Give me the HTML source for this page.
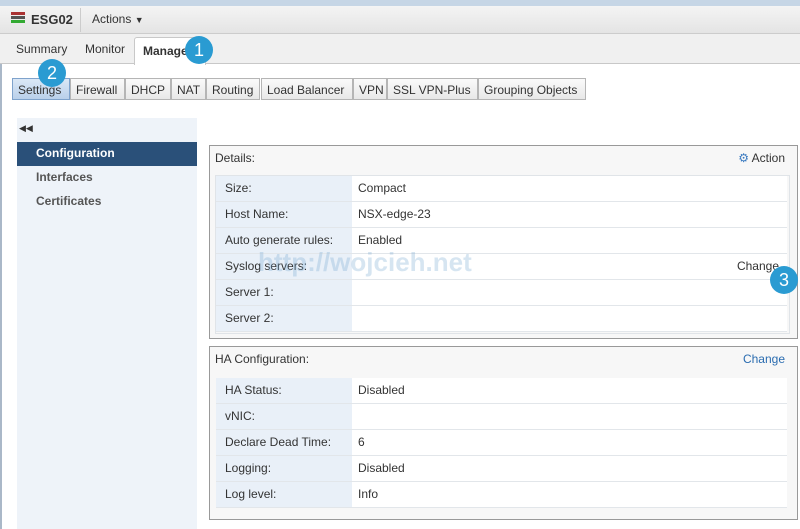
<!DOCTYPE html><html><head><style>
body{margin:0;width:800px;height:529px;overflow:hidden;background:#fff;font-family:"Liberation Sans",sans-serif;font-size:12px;color:#333;position:relative}
.a{position:absolute}
.tab{position:absolute;top:78px;height:22px;line-height:22px;border:1px solid #b5b5b5;background:linear-gradient(#fafafa,#e8e8e8);padding:0 5px;box-sizing:border-box}
.row{position:absolute;left:6px;right:10px;height:25px;border-bottom:1px solid #e2e6ea;background:#fff}
.row .l{position:absolute;left:0;top:0;width:136px;height:100%;background:#e9f0f8;padding-left:9px;line-height:25px;box-sizing:border-box}
.row .v{position:absolute;left:142px;line-height:25px}
.badge{position:absolute;width:28px;height:28px;border-radius:50%;background:#2a9bd2;color:#fff;font-size:18px;text-align:center;line-height:28px}
</style></head><body>
<div class="a" style="left:0;top:0;width:800px;height:6px;background:#c6d6e6"></div>
<div class="a" style="left:0;top:6px;width:800px;height:27px;background:linear-gradient(#f4f4f4,#e4e4e4);border-bottom:1px solid #ccc"></div>
<div class="a" style="left:11px;top:12px;width:14px;height:3px;background:#a33"></div>
<div class="a" style="left:11px;top:16px;width:14px;height:3px;background:#555"></div>
<div class="a" style="left:11px;top:20px;width:14px;height:3px;background:#3a3"></div>
<div class="a" style="left:31px;top:12px;font-size:13px;font-weight:bold;color:#333">ESG02</div>
<div class="a" style="left:80px;top:8px;width:1px;height:24px;background:#ccc"></div>
<div class="a" style="left:92px;top:12px;">Actions <span style="font-size:9px">▼</span></div>
<div class="a" style="left:0;top:34px;width:800px;height:29px;background:#f0f0f0;border-bottom:1px solid #c8c8c8"></div>
<div class="a" style="left:16px;top:42px">Summary</div>
<div class="a" style="left:85px;top:42px">Monitor</div>
<div class="a" style="left:134px;top:37px;width:70px;height:27px;background:#fff;border:1px solid #c8c8c8;border-bottom:none;border-radius:3px 3px 0 0"></div>
<div class="a" style="left:143px;top:44px;font-weight:bold">Manage</div>
<div class="badge" style="left:185px;top:36px">1</div>
<div class="tab" style="left:12px;width:58px;background:linear-gradient(#dbe8f6,#b9d0ea);border-color:#7fa3cc">Settings</div>
<div class="tab" style="left:70px;width:55px">Firewall</div>
<div class="tab" style="left:125px;width:46px">DHCP</div>
<div class="tab" style="left:171px;width:35px">NAT</div>
<div class="tab" style="left:206px;width:54px">Routing</div>
<div class="tab" style="left:261px;width:92px">Load Balancer</div>
<div class="tab" style="left:353px;width:34px">VPN</div>
<div class="tab" style="left:387px;width:91px">SSL VPN-Plus</div>
<div class="tab" style="left:478px;width:108px">Grouping Objects</div>
<div class="badge" style="left:38px;top:59px">2</div>
<div class="a" style="left:0;top:64px;width:2px;height:465px;background:#aab8c8"></div>
<div class="a" style="left:17px;top:118px;width:180px;height:411px;background:#eef3f9"></div>
<div class="a" style="left:19px;top:123px;font-size:9px;color:#333">◀◀</div>
<div class="a" style="left:17px;top:142px;width:180px;height:24px;background:#2a5079"></div>
<div class="a" style="left:36px;top:146px;color:#fff;font-weight:bold">Configuration</div>
<div class="a" style="left:36px;top:170px;color:#555;font-weight:bold">Interfaces</div>
<div class="a" style="left:36px;top:194px;color:#555;font-weight:bold">Certificates</div>

<div class="a" style="left:209px;top:145px;width:587px;height:192px;border:1px solid #999;background:#f7f7f7">
<div class="a" style="left:5px;top:5px">Details:</div>
<div class="a" style="right:12px;top:5px"><span style="color:#3a7ac0">⚙</span> Action</div>
<div class="a" style="left:5px;top:29px;width:573px;height:157px;border:1px solid #e0e4e8"></div>
<div class="row" style="top:30px"><div class="l">Size:</div><div class="v">Compact</div></div>
<div class="row" style="top:56px"><div class="l">Host Name:</div><div class="v">NSX-edge-23</div></div>
<div class="row" style="top:82px"><div class="l">Auto generate rules:</div><div class="v">Enabled</div></div>
<div class="row" style="top:108px"><div class="l">Syslog servers:</div><div class="v" style="left:auto;right:8px">Change</div></div>
<div class="row" style="top:134px"><div class="l">Server 1:</div></div>
<div class="row" style="top:160px"><div class="l">Server 2:</div></div>
</div>
<div class="a" style="left:258px;top:247px;font-size:26px;font-weight:bold;color:rgba(120,170,210,.3)">http://wojcieh.net</div>
<div class="badge" style="left:770px;top:266px">3</div>

<div class="a" style="left:209px;top:346px;width:587px;height:172px;border:1px solid #999;background:#f7f7f7">
<div class="a" style="left:5px;top:5px">HA Configuration:</div>
<div class="a" style="right:12px;top:5px;color:#2a6cb0">Change</div>
<div class="row" style="top:31px"><div class="l">HA Status:</div><div class="v">Disabled</div></div>
<div class="row" style="top:57px"><div class="l">vNIC:</div></div>
<div class="row" style="top:83px"><div class="l">Declare Dead Time:</div><div class="v">6</div></div>
<div class="row" style="top:109px"><div class="l">Logging:</div><div class="v">Disabled</div></div>
<div class="row" style="top:135px"><div class="l">Log level:</div><div class="v">Info</div></div>
</div>
</body></html>
